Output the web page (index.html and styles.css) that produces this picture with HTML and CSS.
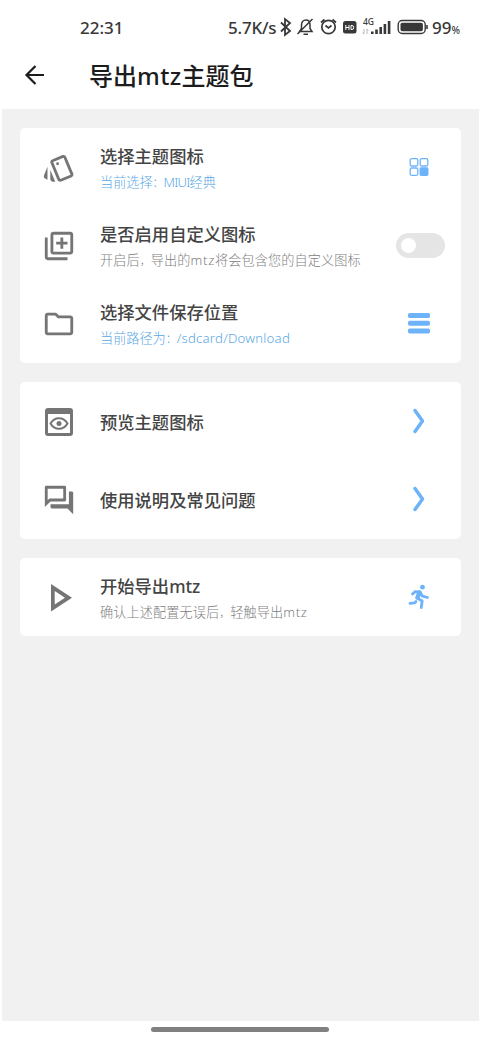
FILE: index.html
```html
<!DOCTYPE html>
<html lang="zh-CN">
<head>
<meta charset="utf-8">
<title>导出mtz主题包</title>
<link rel="stylesheet" href="styles.css">
</head>
<body>
<div class="screen">
  <div class="status">
    <span class="time">22:31</span>
    <span class="speed">5.7K/s</span>
    <svg class="status-icons" width="150" height="24" viewBox="0 0 150 24" fill="none" stroke="#383838">
      <path d="M1 7.500l9 8.500-5 4V4l5 4-9 8.500" stroke-width="1.800"/>
      <g stroke-width="1.500"><path d="M19.500 16.500h12.500l-2-3V10c0-3-1.500-5-4-5s-4.500 2-4.500 5v3.500l-2 3zM23.500 19.200h4.500M32.500 4L17.500 19"/></g>
      <g stroke-width="1.700"><circle cx="48.500" cy="12" r="6.700"/><path d="M45.500 10.500l3 2.500 3-2.500M41 7.500l3.500-3M52.500 4.500l3.500 3"/></g>
      <rect x="63" y="6" width="13.500" height="12.500" rx="2.500" fill="#383838" stroke="none"/>
      <path d="M65.800 10v5M69 10v5M65.800 12.500H69M71 10.500v4h1q1.700 0 1.700-2t-1.700-2z" stroke="#fff" stroke-width="1"/>
      <g fill="#383838" stroke="none"><rect x="91" y="16.500" width="2.600" height="2.500"/><rect x="95.200" y="14.500" width="2.600" height="4.500"/><rect x="99.400" y="12" width="2.600" height="7"/><rect x="103.600" y="9" width="2.600" height="10"/><rect x="107.800" y="6" width="2.600" height="13"/></g>
      <path d="M84 14v5l-1.500-1.500M87 19v-5l1.500 1.500" stroke="#aaa" stroke-width=".8"/>
      <text class="network" x="83" y="10">4G</text>
      <rect x="118.200" y="5.500" width="27" height="13" rx="4" stroke-width="1.400"/>
      <rect x="120.500" y="7.700" width="22.400" height="8.600" rx="1.800" fill="#383838" stroke="none"/>
      <path d="M147 10v4" stroke-width="1.600"/>
    </svg>
    <span class="percent">99<small>%</small></span>
  </div>
  <header class="header">
    <svg class="back" width="22" height="22" viewBox="0 0 22 22" fill="none" stroke="#1c1c1c" stroke-width="2.200"><path d="M20 11H3M11.500 2L2.500 11l9 9"/></svg>
    <h1>导出<span class="latin">mtz</span>主题包</h1>
  </header>
  <main class="content">
    <section class="card">
      <div class="row">
        <svg class="icon" viewBox="0 0 24 24"><path d="M2.530 19.650l1.340.56v-9.030l-2.430 5.860c-.41 1.020.080 2.190 1.090 2.610zm19.500-3.700L17.070 3.980c-.31-.75-1.040-1.210-1.810-1.230-.26 0-.53.040-.79.150L7.100 5.950c-.75.310-1.210 1.030-1.230 1.800-.010.270.040.540.150.800l4.960 11.970c.31.760 1.050 1.220 1.830 1.230.26 0 .52-.050.77-.150l7.360-3.050c1.020-.42 1.510-1.590 1.090-2.600zm-9.200 3.800L7.870 7.790l7.350-3.040h.010l4.950 11.950-7.350 3.050z"/><circle cx="11" cy="9" r="1"/><path d="M5.880 19.750c0 1.100.9 2 2 2h1.450l-3.450-8.340v6.340z"/></svg>
        <div class="text"><h2>选择主题图标</h2><p class="blue">当前选择<i>：</i><span class="latin brand">MIUI</span>经典</p></div>
        <div class="action"><svg width="20" height="20" viewBox="0 0 20 20" fill="none" stroke="#6cb3fa" stroke-width="1.300"><rect x="1.200" y="1.700" width="7.600" height="7.300" rx="1.500"/><rect x="11.200" y="1.700" width="7.600" height="7.300" rx="1.500"/><rect x="1.200" y="11" width="7.600" height="7.300" rx="1.500"/><rect x="11.200" y="11" width="7.600" height="7.300" rx=".8" fill="#6cb3fa"/></svg></div>
      </div>
      <div class="row">
        <svg class="icon" viewBox="0 0 24 24"><path d="M4 6H2v14c0 1.100.9 2 2 2h14v-2H4V6zm16-4H8c-1.100 0-2 .9-2 2v12c0 1.100.9 2 2 2h12c1.100 0 2-.9 2-2V4c0-1.100-.9-2-2-2zm0 14H8V4h12v12zm-7-2h2v-3h3V9h-3V6h-2v3h-3v2h3v3z"/></svg>
        <div class="text"><h2>是否启用自定义图标</h2><p class="hint">开启后<i>，</i>导出的<span class="latin">mtz</span>将会包含您的自定义图标</p></div>
        <div class="action wide"><span class="switch"></span></div>
      </div>
      <div class="row">
        <svg class="icon" viewBox="0 0 24 24"><path d="M9.170 6l2 2H20v10H4V6h5.170M10 4H4c-1.100 0-1.990.9-1.990 2L2 18c0 1.100.9 2 2 2h16c1.100 0 2-.9 2-2V8c0-1.100-.9-2-2-2h-8l-2-2z"/></svg>
        <div class="text"><h2>选择文件保存位置</h2><p class="blue">当前路径为<i>：</i><span class="latin path">/sdcard/Download</span></p></div>
        <div class="action"><svg width="22" height="22" viewBox="0 0 22 22" fill="#6cb3fa"><rect y="1" width="22" height="5" rx="1.700"/><rect y="8.700" width="22" height="5" rx="1.700"/><rect y="16.400" width="22" height="5" rx="1.700"/></svg></div>
      </div>
    </section>
    <section class="card">
      <div class="row">
        <svg class="icon" viewBox="0 0 34 34"><path fill-rule="evenodd" d="M6 3h22q3 0 3 3v22q0 3-3 3H6q-3 0-3-3V6q0-3 3-3zm0 6v19h22V9z"/><path d="M8.500 18.500c4-7 13-7 17 0c-4 7-13 7-17 0z" fill="none" stroke="#757575" stroke-width="2"/><circle cx="17" cy="18.500" r="2.500"/></svg>
        <div class="text"><h2>预览主题图标</h2></div>
        <div class="action"><svg width="16" height="26" viewBox="0 0 16 26" fill="none" stroke="#6cb3fa" stroke-width="3.500" stroke-linecap="round" stroke-linejoin="round"><path d="M4 2.500l7.500 10.500L4 23.500"/></svg></div>
      </div>
      <div class="row">
        <svg class="icon" viewBox="0 0 24 24"><path d="M15 4v7H5.170L4 12.170V4h11m1-2H3c-.55 0-1 .45-1 1v14l4-4h10c.55 0 1-.45 1-1V3c0-.55-.45-1-1-1zm5 4h-2v9H6v2c0 .55.450 1 1 1h11l4 4V7c0-.55-.45-1-1-1z"/></svg>
        <div class="text"><h2>使用说明及常见问题</h2></div>
        <div class="action"><svg width="16" height="26" viewBox="0 0 16 26" fill="none" stroke="#6cb3fa" stroke-width="3.500" stroke-linecap="round" stroke-linejoin="round"><path d="M4 2.500l7.500 10.500L4 23.500"/></svg></div>
      </div>
    </section>
    <section class="card">
      <div class="row">
        <svg class="icon" viewBox="0 0 34 34"><path fill-rule="evenodd" d="M9 3v27.500L30 16.800zM12.700 10L23 16.800 12.700 23.500z"/></svg>
        <div class="text"><h2>开始导出<span class="latin">mtz</span></h2><p class="hint">确认上述配置无误后<i>，</i>轻触导出<span class="latin">mtz</span></p></div>
        <div class="action"><svg width="22" height="26" viewBox="0 0 22 26" fill="none" stroke="#6cb3fa" stroke-width="2.800" stroke-linecap="round" stroke-linejoin="round"><circle cx="14.500" cy="3.200" r="2.400" fill="#6cb3fa" stroke="none"/><path d="M4.500 10L7 7.700l5 .2 2.500 4.300 5 1.300M12 8l-3 6 5.200 3-1 6.500M2 19.300l4.700-.4 1.300-1.400"/><path d="M11.500 8.500l-2 5" stroke-width="4.500"/></svg></div>
      </div>
    </section>
  </main>
  <footer class="nav"><span class="handle"></span></footer>
</div>
</body>
</html>
```
FILE: styles.css
```css
* { box-sizing: border-box; }
body { margin: 0; background: #fff; font-family: "Noto Sans CJK SC", sans-serif; }
.screen { width: 480px; height: 1040px; display: flex; flex-direction: column; overflow: hidden; }
.status { height: 50px; padding: 4px 0 0 80px; display: flex; align-items: center; font-family: "Noto Sans", sans-serif; font-size: 17px; font-weight: 500; color: #383838; white-space: nowrap; }
.time { width: 148px; }
.speed { width: 52px; letter-spacing: -.2px; }
.status-icons { flex: none; }
.network { font: 500 8.500px "Noto Sans", sans-serif; fill: #383838; stroke: none; }
.percent { margin-left: 2px; }
.percent small { font-size: 10px; }
.header { height: 59px; padding: 0 0 9px 24px; display: flex; align-items: center; gap: 43px; }
h1, h2, p { margin: 0; white-space: nowrap; }
h1 { font-size: 24px; line-height: 36px; font-weight: 500; color: #1c1c1c; }
.latin { font-family: "Noto Sans", sans-serif; line-height: 1; }
h1 .latin { letter-spacing: .4px; }
.content { height: 912px; margin: 0 1px 0 2px; padding: 19px 18px 0; background: #f1f1f1; display: flex; flex-direction: column; gap: 19.500px; }
.card { background: #fff; border-radius: 5px; padding-bottom: .5px; }
.card:last-child { padding-bottom: 0; }
.row { height: 78px; padding: 0 16px 0 22px; display: flex; align-items: center; }
.icon { width: 34px; height: 34px; flex: none; fill: #757575; margin-top: 1px; }
.text { flex: 1; margin-left: 24px; padding-top: 3px; }
h2 { font-size: 17.300px; line-height: 26px; font-weight: 500; color: #444; }
h2:only-child { margin-top: -1px; }
p { font-size: 13.150px; line-height: 26px; font-weight: 300; color: #808080; margin-bottom: -1px; }
.hint { letter-spacing: .1px; }
p .latin { letter-spacing: .7px; }
p .brand { letter-spacing: -.8px; }
p .path { letter-spacing: .25px; }
.blue { color: #5aa8e6; }
i { font-size: 11px; font-style: normal; }
.action { width: 50px; display: flex; justify-content: center; }
.action svg { margin-right: 2px; }
.switch { width: 49px; height: 25px; border-radius: 13px; padding: 5px; background: #e5e5e5; }
.switch::before { content: ""; display: block; width: 15px; height: 15px; border-radius: 50%; background: #fff; }
.nav { height: 19px; padding-top: 6px; display: flex; justify-content: center; }
.handle { width: 178px; height: 5px; border-radius: 3px; background: #808080; }
```
